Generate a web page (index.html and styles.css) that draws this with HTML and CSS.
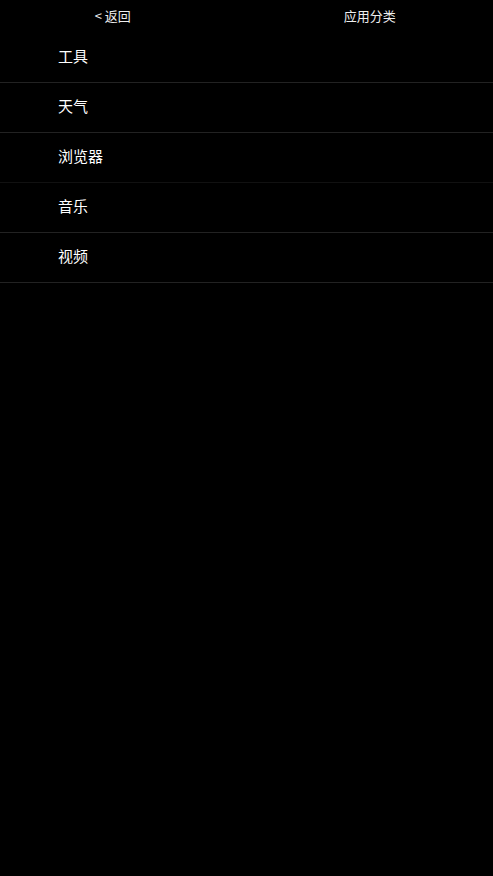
FILE: index.html
```html
<!DOCTYPE html>
<html lang="zh">
<head>
    <meta charset="UTF-8">
    <meta name="viewport" content="width=device-width, initial-scale=1.0">
    <title>应用分类</title>
    <link rel="stylesheet" href="styles.css">
</head>
<body>
    <div class="header">
        <div class="back">&lt; 返回</div>
        <div class="title">应用分类</div>
    </div>
    <ul class="list">
        <li>工具</li>
        <li>天气</li>
        <li class="faint">浏览器</li>
        <li>音乐</li>
        <li>视频</li>
    </ul>
</body>
</html>
```

FILE: styles.css
```css
body {
    margin: 0;
    background: #000;
    color: #fff;
    font-family: "Noto Sans CJK SC", "Noto Sans", sans-serif;
}
.header {
    display: flex;
    height: 33px;
    padding-bottom: 2px;
    box-sizing: border-box;
    align-items: center;
    font-size: 13px;
    color: #eee;
}
.back, .title {
    width: 50%;
    text-align: center;
}
.back {
    padding-right: 21px;
    box-sizing: border-box;
}
.list {
    list-style: none;
    margin: 0;
    padding: 0;
}
.list li {
    height: 49px;
    line-height: 45px;
    padding-left: 58px;
    font-size: 15px;
    border-bottom: 1px solid #222;
}
.list li.faint {
    border-bottom-color: #111;
}
```
